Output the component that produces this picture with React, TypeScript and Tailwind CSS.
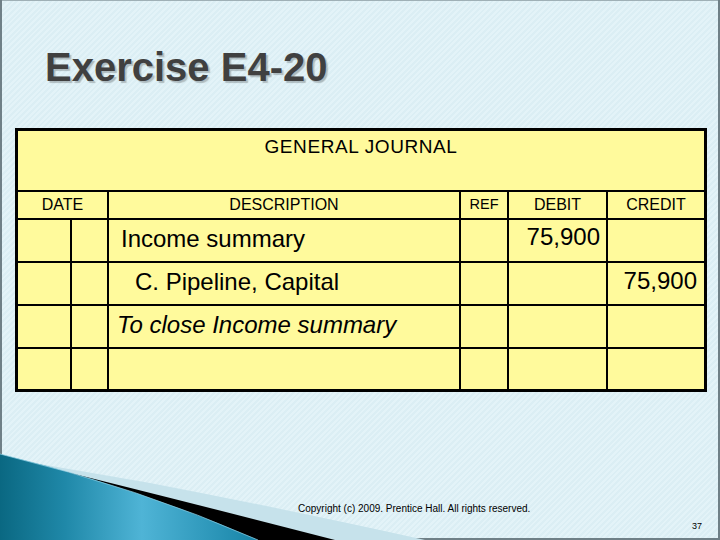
import React from "react";

const Y = "bg-[#fffa9c]";

export default function App() {
  return (
    <div className="relative w-[720px] h-[540px] overflow-hidden flex flex-col font-['Liberation_Sans',Arial,sans-serif] bg-[#dff1f6] bg-[image:repeating-linear-gradient(135deg,#dbeef4_0px,#dbeef4_2px,#e3f3f8_2px,#e3f3f8_4px)] shadow-[inset_2px_0_0_#6f8087,inset_-2px_0_0_#6f8087,inset_0_-2px_0_#6f8087,inset_0_1px_0_#9fb0b6]">
      <svg className="absolute inset-0 z-0" width="720" height="540" viewBox="0 0 720 540">
        <defs>
          <linearGradient id="teal" x1="0" y1="0" x2="1" y2="0">
            <stop offset="0" stopColor="#0a6882" />
            <stop offset="0.25" stopColor="#1f88a8" />
            <stop offset="0.55" stopColor="#4fb4d6" />
            <stop offset="1" stopColor="#1784a7" />
          </linearGradient>
        </defs>
        <path d="M40,464 L150,483 Q300,512 425,540 L40,540 Z" fill="#c6e2eb" />
        <path d="M38,465 Q180,500 335,540 L38,540 Z" fill="#000" />
        <path d="M0,454 Q140,488 258,540 L0,540 Z" fill="url(#teal)" />
        <path d="M0,454 Q140,488 258,540" fill="none" stroke="#8fd0e6" strokeWidth="1" opacity="0.7" />
      </svg>

      <div className="relative z-10 flex flex-col">
        <h1 className="ml-[45px] mt-[47px] text-[40px] leading-[40px] font-bold text-[#404040] [text-shadow:2px_2px_1px_rgba(0,0,0,0.22)]">
          Exercise E4-20
        </h1>

        <div className="ml-[15px] mt-[41px] w-[692px] border-[3px] border-black bg-black grid grid-cols-[52px_35px_350px_46px_97px_96px] grid-rows-[59px_26px_41px_41px_41px_40px] gap-[2px] text-black">
          <div className={`${Y} col-span-6 flex justify-center pt-[6px] text-[19px] leading-none tracking-[0.6px]`}>
            GENERAL JOURNAL
          </div>

          <div className={`${Y} col-span-2 flex items-center justify-center text-[16px] leading-none`}>DATE</div>
          <div className={`${Y} flex items-center justify-center text-[16px] leading-none`}>DESCRIPTION</div>
          <div className={`${Y} flex items-center justify-center pb-[2px] text-[14.5px] leading-none`}>REF</div>
          <div className={`${Y} flex items-center justify-center text-[16px] leading-none`}>DEBIT</div>
          <div className={`${Y} flex items-center justify-center text-[16px] leading-none`}>CREDIT</div>

          {/* Row 1 */}
          <div className={Y} />
          <div className={Y} />
          <div className={`${Y} flex items-center pl-[12px] pb-[4px] text-[24px] leading-none`}>Income summary</div>
          <div className={Y} />
          <div className={`${Y} flex items-center justify-end pr-[6px] pb-[8px] text-[24px] leading-none`}>75,900</div>
          <div className={Y} />

          {/* Row 2 */}
          <div className={Y} />
          <div className={Y} />
          <div className={`${Y} flex items-center pl-[26px] pb-[4px] text-[24px] leading-none`}>C. Pipeline, Capital</div>
          <div className={Y} />
          <div className={Y} />
          <div className={`${Y} flex items-center justify-end pr-[7px] pb-[6px] text-[24px] leading-none`}>75,900</div>

          {/* Row 3 */}
          <div className={Y} />
          <div className={Y} />
          <div className={`${Y} flex items-center pl-[8px] pb-[4px] text-[24px] leading-none italic`}>To close Income summary</div>
          <div className={Y} />
          <div className={Y} />
          <div className={Y} />

          {/* Row 4 */}
          <div className={Y} />
          <div className={Y} />
          <div className={Y} />
          <div className={Y} />
          <div className={Y} />
          <div className={Y} />
        </div>

        <p className="ml-[298px] mt-[112px] text-[10px] leading-none text-black">
          Copyright (c) 2009. Prentice Hall. All rights reserved.
        </p>
        <p className="self-end mr-[18px] mt-[8px] text-[9px] leading-none text-black">37</p>
      </div>
    </div>
  );
}
